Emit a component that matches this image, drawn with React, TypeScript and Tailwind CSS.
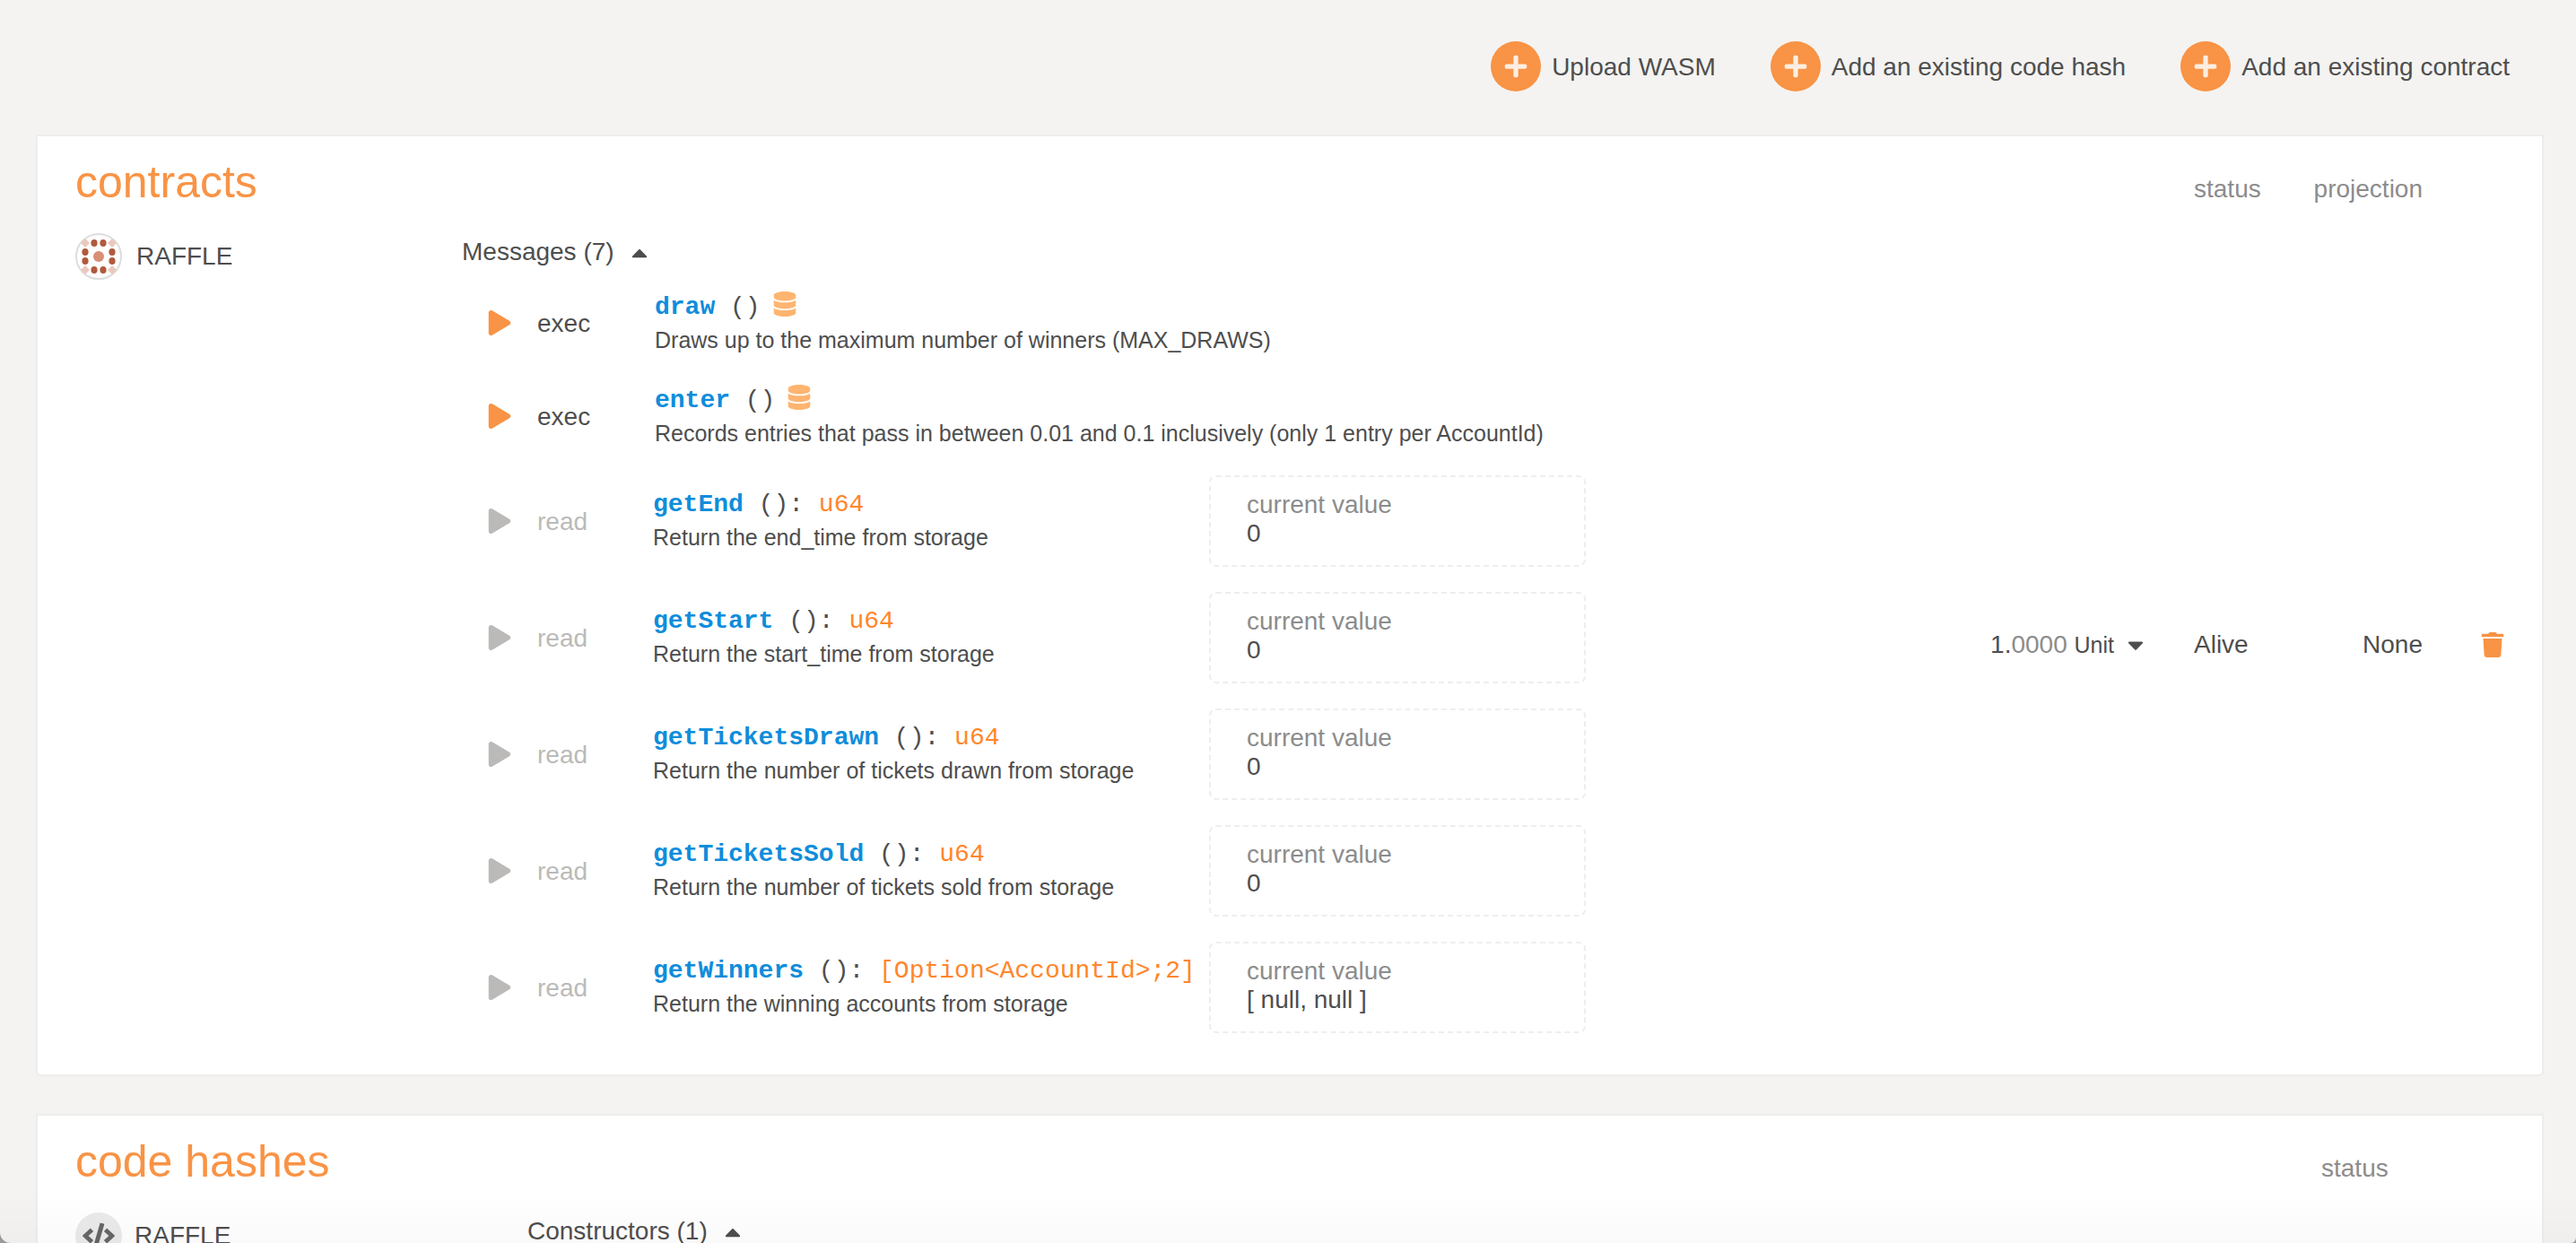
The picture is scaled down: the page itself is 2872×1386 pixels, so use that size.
import type { ReactNode } from "react";
import { FaCaretDown, FaCaretUp, FaCode, FaDatabase, FaPlay, FaPlus, FaTrash } from "react-icons/fa";

type Message = {
  name: string;
  doc: string;
  returns?: string;
  value?: string;
};

const actions = ["Upload WASM", "Add an existing code hash", "Add an existing contract"];

const messages: Message[] = [
  { name: "draw", doc: "Draws up to the maximum number of winners (MAX_DRAWS)" },
  { name: "enter", doc: "Records entries that pass in between 0.01 and 0.1 inclusively (only 1 entry per AccountId)" },
  { name: "getEnd", doc: "Return the end_time from storage", returns: "u64", value: "0" },
  { name: "getStart", doc: "Return the start_time from storage", returns: "u64", value: "0" },
  { name: "getTicketsDrawn", doc: "Return the number of tickets drawn from storage", returns: "u64", value: "0" },
  { name: "getTicketsSold", doc: "Return the number of tickets sold from storage", returns: "u64", value: "0" },
  { name: "getWinners", doc: "Return the winning accounts from storage", returns: "[Option<AccountId>;2]", value: "[ null, null ]" },
];

function Identicon() {
  const dots = [
    [-5, -15], [5, -15], [-5, 15], [5, 15],
    [-15, -5], [-15, 5], [15, -5], [15, 5],
  ];
  const corners = [[-15, -15], [15, -15], [-15, 15], [15, 15]];
  return (
    <svg viewBox="-26 -26 52 52" className="size-13 shrink-0" aria-hidden="true">
      <circle r="25" fill="#fff" stroke="#dddddd" strokeWidth="2" />
      {corners.map(([x, y]) => (
        <path key={`${x},${y}`} d={`M${x} ${y - 5}l5 5l-5 5l-5-5z`} fill="#ebc8bd" />
      ))}
      {dots.map(([x, y]) => (
        <ellipse key={`${x},${y}`} cx={x} cy={y} rx="3.6" ry="4.1" fill="#b05a3c" />
      ))}
      <circle r="6" fill="#d88f75" />
    </svg>
  );
}

function Card({ children }: { children: ReactNode }) {
  return (
    <section className="rounded-b-md border-2 border-[#ededeb] bg-white">
      <table className="w-full table-fixed border-collapse">{children}</table>
    </section>
  );
}

function MessageRow({ message }: { message: Message }) {
  const readOnly = message.value !== undefined;
  return (
    <li className="flex items-center">
      <button
        type="button"
        disabled={readOnly}
        className={`flex w-[185px] shrink-0 items-center gap-7 ${readOnly ? "text-[#bbbab8]" : "text-[#4e4e4e]"}`}
      >
        <FaPlay className={readOnly ? "text-[#bbbab8]" : "text-[#f99345]"} />
        <span className="pt-0.5">{readOnly ? "read" : "exec"}</span>
      </button>
      <div className={readOnly ? "w-[620px] shrink-0 whitespace-nowrap" : "ml-0.5 pt-[3px] pb-px whitespace-nowrap"}>
        <div className="flex h-9 font-['Liberation_Mono',monospace] whitespace-pre">
          <span className="font-bold text-[#0f8ddb]">{message.name}</span>
          <span> ()</span>
          {readOnly ? (
            <>
              <span>: </span>
              <span className="text-[#ff862b]">{message.returns}</span>
            </>
          ) : (
            <FaDatabase className="ml-[13px] text-[#ffb570]" />
          )}
        </div>
        <div className="text-[25px] leading-9">{message.doc}</div>
      </div>
      {readOnly && (
        <dl className="h-[102px] w-[420px] rounded-lg border-2 border-dashed border-[#eeeeee] px-10 pt-[15px] leading-8">
          <dt className="text-[#8c8c8c]">current value</dt>
          <dd>{message.value}</dd>
        </dl>
      )}
    </li>
  );
}

export default function App() {
  return (
    <div className="bg-[#9a9a9a]">
      <div className="relative h-screen overflow-hidden rounded-br-md rounded-bl-xl bg-[#f4f3f1] pr-9 pl-10 font-['Liberation_Sans',Arial,sans-serif] text-[28px] leading-9 text-[#4e4e4e]">
        <nav className="flex h-[150px] items-start justify-end gap-[61px] pt-[46px] pr-[38px]">
          {actions.map((label) => (
            <button key={label} type="button" className="flex items-center gap-3">
              <span className="flex size-14 items-center justify-center rounded-full bg-[#f99345] text-[#fdeee1]">
                <FaPlus />
              </span>
              <span className="pt-0.5">{label}</span>
            </button>
          ))}
        </nav>

        <main className="flex flex-col gap-[42px]">
          <Card>
            <colgroup>
              <col className="w-[473px]" />
              <col />
              <col className="w-[300px]" />
              <col className="w-[111px]" />
              <col className="w-[198px]" />
              <col className="w-[79px]" />
            </colgroup>
            <thead>
              <tr className="h-22 text-left align-baseline">
                <th colSpan={3} className="pt-[21px] pl-10.5 font-normal">
                  <h1 className="text-[50px] leading-15 text-[#f99345]">contracts</h1>
                </th>
                <th className="font-normal text-[#8c8c8c]">status</th>
                <th className="pr-[54px] text-right font-normal text-[#8c8c8c]">projection</th>
                <th aria-label="actions" />
              </tr>
            </thead>
            <tbody>
              <tr>
                <td className="pt-5 pl-10.5 align-top">
                  <div className="flex items-center gap-4">
                    <Identicon />
                    RAFFLE
                  </div>
                </td>
                <td className="pt-[23px] pb-[46px] align-top">
                  <button type="button" className="flex items-center gap-3.5">
                    Messages (7) <FaCaretUp className="mt-0.5" />
                  </button>
                  <ul className="mt-[23px] flex flex-col gap-7 pl-7">
                    {messages.map((message) => (
                      <MessageRow key={message.name} message={message} />
                    ))}
                  </ul>
                </td>
                <td className="pr-[51px]">
                  <button type="button" className="ml-auto flex items-center gap-2.5">
                    <span>
                      1.<span className="text-[#8c8c8c]">0000</span> <span className="text-[25px]">Unit</span>
                    </span>
                    <FaCaretDown />
                  </button>
                </td>
                <td>Alive</td>
                <td className="pr-[54px] text-right">None</td>
                <td>
                  <button type="button" aria-label="Forget contract" className="mr-[41px] ml-auto block text-[#f99345]">
                    <FaTrash />
                  </button>
                </td>
              </tr>
            </tbody>
          </Card>

          <Card>
            <colgroup>
              <col className="w-[546px]" />
              <col />
              <col className="w-[246px]" />
            </colgroup>
            <thead>
              <tr className="h-22 text-left align-baseline">
                <th colSpan={2} className="pt-[21px] pl-10.5 font-normal">
                  <h1 className="text-[50px] leading-15 text-[#f99345]">code hashes</h1>
                </th>
                <th className="font-normal text-[#8c8c8c]">status</th>
              </tr>
            </thead>
            <tbody>
              <tr>
                <td className="pt-5 pl-10.5 align-top">
                  <div className="flex items-center gap-3.5">
                    <span className="flex size-13 items-center justify-center rounded-full bg-[#eaeaea] text-[36px] text-[#666666]">
                      <FaCode />
                    </span>
                    RAFFLE
                  </div>
                </td>
                <td className="pt-[23px] align-top">
                  <button type="button" className="flex items-center gap-3.5">
                    Constructors (1) <FaCaretUp className="mt-0.5" />
                  </button>
                </td>
                <td />
              </tr>
            </tbody>
          </Card>
        </main>

        <div className="pointer-events-none absolute inset-x-0 bottom-0 h-14 bg-linear-to-b from-transparent to-black/2" />
      </div>
    </div>
  );
}
